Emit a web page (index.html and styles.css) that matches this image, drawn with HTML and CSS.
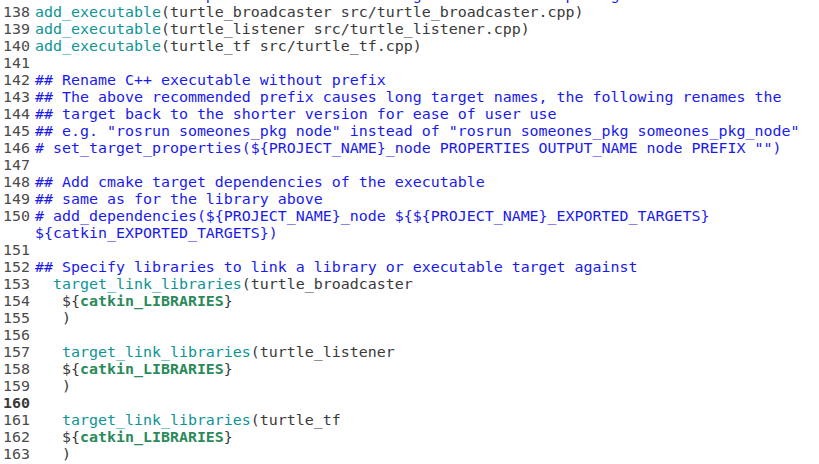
FILE: index.html
```html
<!DOCTYPE html>
<html>
<head>
<meta charset="utf-8">
<link rel="stylesheet" href="styles.css">
</head>
<body>
<div class="editor">
  <div class="row"><span class="ln">137</span><span class="code cm">## The recommended prefix ensures that target names across packages don't collide</span></div>
  <div class="row"><span class="ln">138</span><span class="code"><span class="fn">add_executable</span>(turtle_broadcaster src/turtle_broadcaster.cpp)</span></div>
  <div class="row"><span class="ln">139</span><span class="code"><span class="fn">add_executable</span>(turtle_listener src/turtle_listener.cpp)</span></div>
  <div class="row"><span class="ln">140</span><span class="code"><span class="fn">add_executable</span>(turtle_tf src/turtle_tf.cpp)</span></div>
  <div class="row"><span class="ln">141</span><span class="code"></span></div>
  <div class="row"><span class="ln">142</span><span class="code cm">## Rename C++ executable without prefix</span></div>
  <div class="row"><span class="ln">143</span><span class="code cm">## The above recommended prefix causes long target names, the following renames the</span></div>
  <div class="row"><span class="ln">144</span><span class="code cm">## target back to the shorter version for ease of user use</span></div>
  <div class="row"><span class="ln">145</span><span class="code cm">## e.g. "rosrun someones_pkg node" instead of "rosrun someones_pkg someones_pkg_node"</span></div>
  <div class="row"><span class="ln">146</span><span class="code cm"># set_target_properties(${PROJECT_NAME}_node PROPERTIES OUTPUT_NAME node PREFIX "")</span></div>
  <div class="row"><span class="ln">147</span><span class="code"></span></div>
  <div class="row"><span class="ln">148</span><span class="code cm">## Add cmake target dependencies of the executable</span></div>
  <div class="row"><span class="ln">149</span><span class="code cm">## same as for the library above</span></div>
  <div class="row"><span class="ln">150</span><span class="code cm"># add_dependencies(${PROJECT_NAME}_node ${${PROJECT_NAME}_EXPORTED_TARGETS}</span></div>
  <div class="row"><span class="ln"></span><span class="code cm">${catkin_EXPORTED_TARGETS})</span></div>
  <div class="row"><span class="ln">151</span><span class="code"></span></div>
  <div class="row"><span class="ln">152</span><span class="code cm">## Specify libraries to link a library or executable target against</span></div>
  <div class="row"><span class="ln">153</span><span class="code">  <span class="fn">target_link_libraries</span>(turtle_broadcaster</span></div>
  <div class="row"><span class="ln">154</span><span class="code">   ${<span class="var">catkin_LIBRARIES</span>}</span></div>
  <div class="row"><span class="ln">155</span><span class="code">   )</span></div>
  <div class="row"><span class="ln">156</span><span class="code"></span></div>
  <div class="row"><span class="ln">157</span><span class="code">   <span class="fn">target_link_libraries</span>(turtle_listener</span></div>
  <div class="row"><span class="ln">158</span><span class="code">   ${<span class="var">catkin_LIBRARIES</span>}</span></div>
  <div class="row"><span class="ln">159</span><span class="code">   )</span></div>
  <div class="row current"><span class="ln">160</span><span class="code"></span></div>
  <div class="row"><span class="ln">161</span><span class="code">   <span class="fn">target_link_libraries</span>(turtle_tf</span></div>
  <div class="row"><span class="ln">162</span><span class="code">   ${<span class="var">catkin_LIBRARIES</span>}</span></div>
  <div class="row"><span class="ln">163</span><span class="code">   )</span></div>
</div>
</body>
</html>
```

FILE: styles.css
```css
html, body {
  margin: 0;
  padding: 0;
  background: #ffffff;
  overflow: hidden;
}

.editor {
  margin-top: -13px;
  font-family: "DejaVu Sans Mono", monospace;
  font-size: 14.95px;
  line-height: 17px;
  color: #3a3a3a;
}

.row {
  display: grid;
  grid-template-columns: 30px 1fr;
  column-gap: 5px;
  height: 17px;
}

.ln {
  text-align: right;
  color: #4a4a4a;
}

.current .ln {
  font-weight: bold;
  color: #3a3a3a;
}

.code {
  white-space: pre;
}

.cm {
  color: #1a1aee;
}

.fn {
  color: #0d9494;
}

.var {
  color: #2a8a5a;
  font-weight: bold;
}
```
